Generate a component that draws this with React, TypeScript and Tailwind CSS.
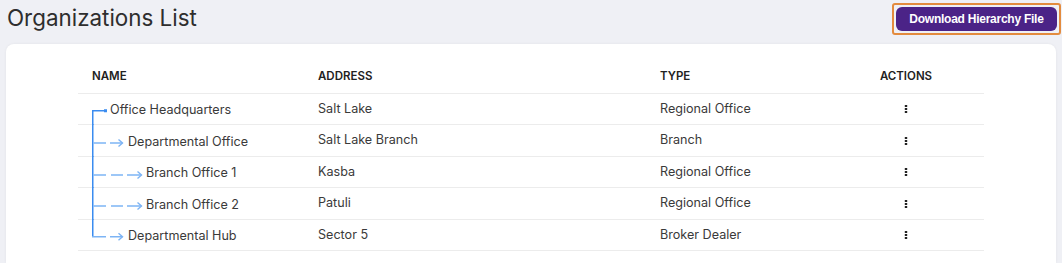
import React from "react";

const DARK = "#3a8cf0";
const LIGHT = "#7db4f4";

type Kind = "root" | "child" | "grand" | "last";

function Tree({ kind, h }: { kind: Kind; h: number }) {
  const y = kind === "root" || kind === "last" ? 16.75 : 18;
  const w = kind === "root" ? 20 : kind === "grand" ? 56 : 38;
  const vx = 2.75;
  return (
    <svg width={w} height={h} style={{ overflow: "visible" }} className="shrink-0">
      {kind === "root" && (
        <>
          <line x1={vx} y1={y - 0.75} x2={vx} y2={h + 1} stroke={DARK} strokeWidth={1.5} />
          <line x1={2} y1={y} x2={15} y2={y} stroke={DARK} strokeWidth={1.5} />
          <rect x={14} y={y - 1.5} width={3} height={3} fill={DARK} />
        </>
      )}
      {kind === "child" && (
        <>
          <line x1={vx} y1={-1} x2={vx} y2={h + 1} stroke={DARK} strokeWidth={1.5} />
          <line x1={3.5} y1={y} x2={16} y2={y} stroke={LIGHT} strokeWidth={1.5} />
          <line x1={20} y1={y} x2={32.5} y2={y} stroke={LIGHT} strokeWidth={1.5} />
          <polyline points={`28.5,${y - 3.5} 32.5,${y} 28.5,${y + 3.5}`} fill="none" stroke={LIGHT} strokeWidth={1.4} />
        </>
      )}
      {kind === "grand" && (
        <>
          <line x1={vx} y1={-1} x2={vx} y2={h + 1} stroke={DARK} strokeWidth={1.5} />
          <line x1={3.5} y1={y} x2={16} y2={y} stroke={LIGHT} strokeWidth={1.5} />
          <line x1={21} y1={y} x2={33} y2={y} stroke={LIGHT} strokeWidth={1.5} />
          <line x1={37} y1={y} x2={51.5} y2={y} stroke={LIGHT} strokeWidth={1.5} />
          <polyline points={`47.5,${y - 3.5} 51.5,${y} 47.5,${y + 3.5}`} fill="none" stroke={LIGHT} strokeWidth={1.4} />
        </>
      )}
      {kind === "last" && (
        <>
          <line x1={vx} y1={-1} x2={vx} y2={y} stroke={DARK} strokeWidth={1.5} />
          <line x1={2} y1={y} x2={16} y2={y} stroke={LIGHT} strokeWidth={1.5} />
          <line x1={20} y1={y} x2={32.5} y2={y} stroke={LIGHT} strokeWidth={1.5} />
          <polyline points={`28.5,${y - 3.5} 32.5,${y} 28.5,${y + 3.5}`} fill="none" stroke={LIGHT} strokeWidth={1.4} />
        </>
      )}
    </svg>
  );
}

function Dots() {
  return (
    <svg width="4" height="8" viewBox="0 0 4 8" className="block">
      <rect x="0.8" y="0" width="2.4" height="2" fill="#222" />
      <rect x="0.8" y="3" width="2.4" height="2" fill="#222" />
      <rect x="0.8" y="6" width="2.4" height="2" fill="#222" />
    </svg>
  );
}

const rows: { name: string; address: string; type: string; kind: Kind; h: number; cls: string }[] = [
  { name: "Office Headquarters", address: "Salt Lake", type: "Regional Office", kind: "root", h: 30, cls: "h-[31px]" },
  { name: "Departmental Office", address: "Salt Lake Branch", type: "Branch", kind: "child", h: 31, cls: "h-[32px]" },
  { name: "Branch Office 1", address: "Kasba", type: "Regional Office", kind: "grand", h: 30, cls: "h-[31px]" },
  { name: "Branch Office 2", address: "Patuli", type: "Regional Office", kind: "grand", h: 31, cls: "h-[32px]" },
  { name: "Departmental Hub", address: "Sector 5", type: "Broker Dealer", kind: "last", h: 30, cls: "h-[31px]" },
];

export default function App() {
  return (
    <div
      className="min-h-[263px] w-full bg-[#eff0f5] px-[6px]"
      style={{ fontFamily: "Inter, 'Noto Sans', sans-serif" }}
    >
      <div className="flex h-[44px] items-start justify-between">
        <h1 className="ml-[1px] mt-[3px] text-[22.4px] font-normal leading-[30px] text-[#2e2e2e]">
          Organizations List
        </h1>
        <div className="mr-[-5px] mt-[3px] rounded-[3px] border-2 border-[#e38b3e] p-[2px]">
          <button
            className="flex h-[24px] w-[161px] items-center justify-center rounded-[6px] bg-[#4b2387] text-[12px] font-bold tracking-[-0.25px] text-white"
            style={{ fontFamily: "'Liberation Sans', Arial, sans-serif" }}
          >
            Download Hierarchy File
          </button>
        </div>
      </div>
      <div className="h-[219px] rounded-t-[8px] bg-white px-[72px] pt-[16px] shadow-[0_0_3px_rgba(0,0,0,0.06)]">
        <div className="grid h-[34px] grid-cols-[226px_342px_182px_156px] items-center border-b border-[#ececec] text-[11.5px] font-semibold uppercase text-[#222]">
          <div className="pl-[14px]">Name</div>
          <div className="pl-[14px]">Address</div>
          <div className="pl-[14px]">Type</div>
          <div className="text-center">Actions</div>
        </div>
        {rows.map((r) => (
          <div
            key={r.name}
            className={`grid grid-cols-[226px_342px_182px_156px] items-stretch border-b border-[#ececec] text-[12.6px] text-[#3a3a3a] ${r.cls}`}
          >
            <div className="flex items-stretch pl-[12px]">
              <Tree kind={r.kind} h={r.h} />
              <span className="flex items-center pt-[3px]">{r.name}</span>
            </div>
            <div className="flex items-center pl-[14px]">{r.address}</div>
            <div className="flex items-center pl-[14px]">{r.type}</div>
            <div className="flex items-center justify-center">
              <Dots />
            </div>
          </div>
        ))}
      </div>
    </div>
  );
}
